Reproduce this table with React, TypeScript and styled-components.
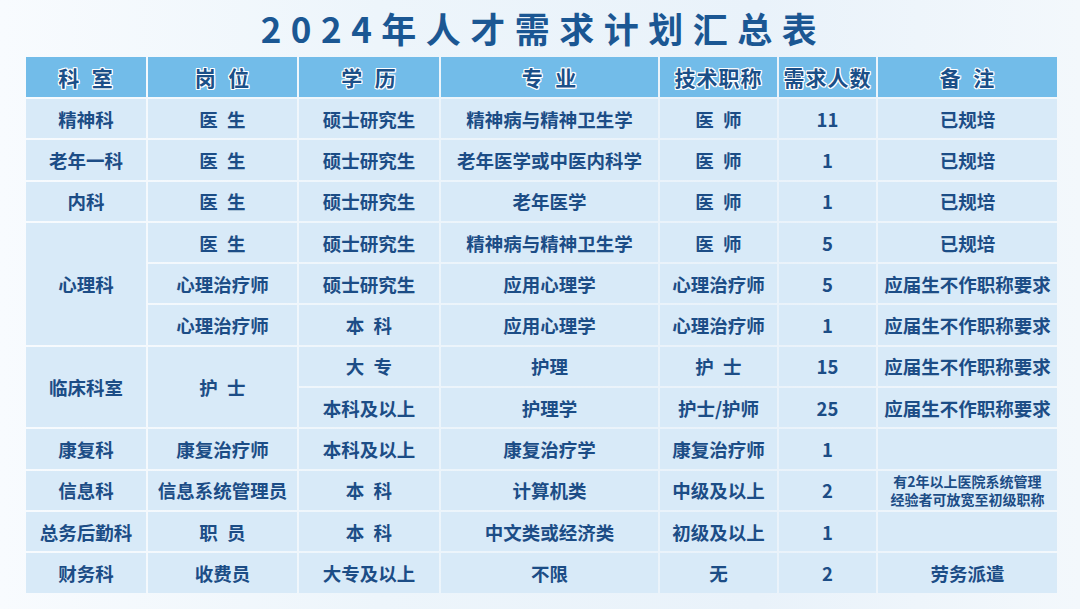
import React from 'react'
import styled, { createGlobalStyle } from 'styled-components'

const GlobalStyle = createGlobalStyle`
  html, body {
    margin: 0;
    padding: 0;
  }
  body {
    font-family: "Noto Sans CJK SC", "Noto Sans", sans-serif;
    background: #eef5fb;
  }
`

type Cell = {
  text: string
  rows?: number
  small?: boolean
}

const S = '\u2002'

const headers = [`科${S}室`, `岗${S}位`, `学${S}历`, `专${S}业`, '技术职称', '需求人数', `备${S}注`]

const body: Cell[][] = [
  [{ text: '精神科' }, { text: `医${S}生` }, { text: '硕士研究生' }, { text: '精神病与精神卫生学' }, { text: `医${S}师` }, { text: '11' }, { text: '已规培' }],
  [{ text: '老年一科' }, { text: `医${S}生` }, { text: '硕士研究生' }, { text: '老年医学或中医内科学' }, { text: `医${S}师` }, { text: '1' }, { text: '已规培' }],
  [{ text: '内科' }, { text: `医${S}生` }, { text: '硕士研究生' }, { text: '老年医学' }, { text: `医${S}师` }, { text: '1' }, { text: '已规培' }],
  [{ text: '心理科', rows: 3 }, { text: `医${S}生` }, { text: '硕士研究生' }, { text: '精神病与精神卫生学' }, { text: `医${S}师` }, { text: '5' }, { text: '已规培' }],
  [{ text: '心理治疗师' }, { text: '硕士研究生' }, { text: '应用心理学' }, { text: '心理治疗师' }, { text: '5' }, { text: '应届生不作职称要求' }],
  [{ text: '心理治疗师' }, { text: `本${S}科` }, { text: '应用心理学' }, { text: '心理治疗师' }, { text: '1' }, { text: '应届生不作职称要求' }],
  [{ text: '临床科室', rows: 2 }, { text: `护${S}士`, rows: 2 }, { text: `大${S}专` }, { text: '护理' }, { text: `护${S}士` }, { text: '15' }, { text: '应届生不作职称要求' }],
  [{ text: '本科及以上' }, { text: '护理学' }, { text: '护士/护师' }, { text: '25' }, { text: '应届生不作职称要求' }],
  [{ text: '康复科' }, { text: '康复治疗师' }, { text: '本科及以上' }, { text: '康复治疗学' }, { text: '康复治疗师' }, { text: '1' }, { text: '' }],
  [{ text: '信息科' }, { text: '信息系统管理员' }, { text: `本${S}科` }, { text: '计算机类' }, { text: '中级及以上' }, { text: '2' }, { text: '有2年以上医院系统管理\n经验者可放宽至初级职称', small: true }],
  [{ text: '总务后勤科' }, { text: `职${S}员` }, { text: `本${S}科` }, { text: '中文类或经济类' }, { text: '初级及以上' }, { text: '1' }, { text: '' }],
  [{ text: '财务科' }, { text: '收费员' }, { text: '大专及以上' }, { text: '不限' }, { text: '无' }, { text: '2' }, { text: '劳务派遣' }],
]

export default function App() {
  return (
    <Page>
      <GlobalStyle />
      <Title>2024年人才需求计划汇总表</Title>
      <Grid>
        {headers.map((h) => (
          <HeadCell key={h}>{h}</HeadCell>
        ))}
        {body.map((row, r) =>
          row.map((cell, c) => (
            <BodyCell key={`${r}-${c}`} $rows={cell.rows ?? 1} $small={!!cell.small}>
              {cell.text}
            </BodyCell>
          ))
        )}
      </Grid>
    </Page>
  )
}

const Page = styled.div`
  width: 1080px;
  height: 609px;
  overflow: hidden;
  box-sizing: border-box;
  padding: 0 23px 0 26px;
  display: flex;
  flex-direction: column;
  background: linear-gradient(90deg, #f8fbfe 0%, #edf5fb 35%, #e9f2fa 70%, #f3f8fc 100%);
`

const Title = styled.h1`
  margin: 0;
  height: 57px;
  padding-bottom: 3px;
  box-sizing: border-box;
  display: flex;
  align-items: center;
  justify-content: center;
  padding-left: 4px;
  font-size: 35px;
  font-weight: 700;
  letter-spacing: 9.5px;
  color: #1b5793;
`

const Grid = styled.div`
  display: grid;
  grid-template-columns: 120px 149px 140px 217px 117px 97px 179px;
  grid-template-rows: 40px repeat(12, 39.3px);
  gap: 2px;
`

const HeadCell = styled.div`
  display: flex;
  align-items: center;
  justify-content: center;
  background: #72bce9;
  color: #1b4f88;
  font-size: 21px;
  font-weight: 700;
  letter-spacing: 1px;
  text-shadow:
    1px 0 0 #fff, -1px 0 0 #fff, 0 1px 0 #fff, 0 -1px 0 #fff,
    1px 1px 0 #fff, -1px -1px 0 #fff, 1px -1px 0 #fff, -1px 1px 0 #fff;
`

const BodyCell = styled.div<{ $rows: number; $small: boolean }>`
  grid-row: span ${(p) => p.$rows};
  display: flex;
  align-items: center;
  justify-content: center;
  text-align: center;
  white-space: pre-line;
  background: #d8eaf8;
  color: #1c4d86;
  font-size: ${(p) => (p.$small ? '14px' : '18.5px')};
  line-height: ${(p) => (p.$small ? '18px' : '24px')};
  font-weight: 700;
`
